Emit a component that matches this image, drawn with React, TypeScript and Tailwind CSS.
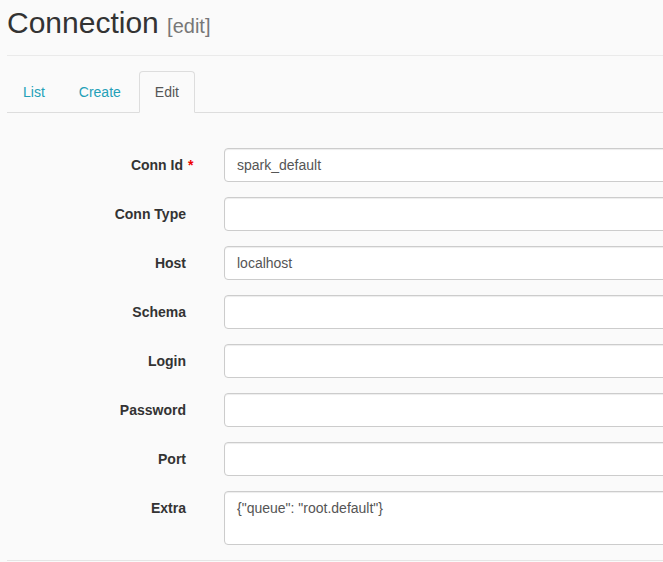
import React from "react";

const fields = [
  { label: "Conn Id", value: "spark_default", required: true },
  { label: "Conn Type", value: "" },
  { label: "Host", value: "localhost" },
  { label: "Schema", value: "" },
  { label: "Login", value: "" },
  { label: "Password", value: "" },
  { label: "Port", value: "" },
];

export default function App() {
  return (
    <div className="w-[663px] h-[562px] overflow-hidden bg-[#fafafa] text-[#333] font-['Liberation_Sans',Arial,sans-serif]">
      <div className="pl-[7px]">
        {/* page header */}
        <div className="pt-[6px] pb-[12px] border-b border-[#eaeaea]">
          <h1 className="text-[30px] leading-[33px] font-normal">
            Connection <span className="text-[20px] text-[#777]">[edit]</span>
          </h1>
        </div>

        {/* tabs */}
        <ul className="mt-[15px] flex items-end gap-[2px] border-b border-[#ddd] text-[14px] leading-[20px]">
          <li className="-mb-px">
            <a className="block px-[15px] py-[10px] border border-transparent text-[#23a0b8]">List</a>
          </li>
          <li className="-mb-px">
            <a className="block px-[15px] py-[10px] border border-transparent text-[#23a0b8]">Create</a>
          </li>
          <li className="-mb-px">
            <a className="block px-[15px] py-[10px] border border-[#ddd] border-b-[#fafafa] rounded-t-[4px] bg-[#fafafa] text-[#555]">
              Edit
            </a>
          </li>
        </ul>

        {/* form */}
        <form className="pt-[35px] pb-[15px] border-b border-[#e5e5e5] flex flex-col gap-[15px] text-[14px]">
          {fields.map((f) => (
            <div key={f.label} className="flex items-center">
              <label className={f.required ? "w-[179px] shrink-0 text-right font-bold relative pr-[3px]" : "w-[179px] shrink-0 text-right font-bold relative"}>
                {f.label}
                {f.required && (
                  <span className="absolute left-full ml-[2px] text-[#e00] font-bold">*</span>
                )}
              </label>
              <input
                readOnly
                value={f.value}
                className="ml-[38px] w-[500px] shrink-0 h-[34px] px-[12px] bg-white border border-[#ccc] rounded-[4px] text-[#555] shadow-[inset_0_1px_1px_rgba(0,0,0,0.075)] outline-none"
              />
            </div>
          ))}
          <div className="flex items-start">
            <label className="w-[179px] shrink-0 text-right font-bold pt-[7px]">Extra</label>
            <textarea
              readOnly
              value={'{"queue": "root.default"}'}
              className="ml-[38px] w-[500px] shrink-0 h-[54px] px-[12px] py-[6px] leading-[20px] bg-white border border-[#ccc] rounded-[4px] text-[#555] resize-none shadow-[inset_0_1px_1px_rgba(0,0,0,0.075)] outline-none"
            />
          </div>
        </form>
      </div>
    </div>
  );
}
